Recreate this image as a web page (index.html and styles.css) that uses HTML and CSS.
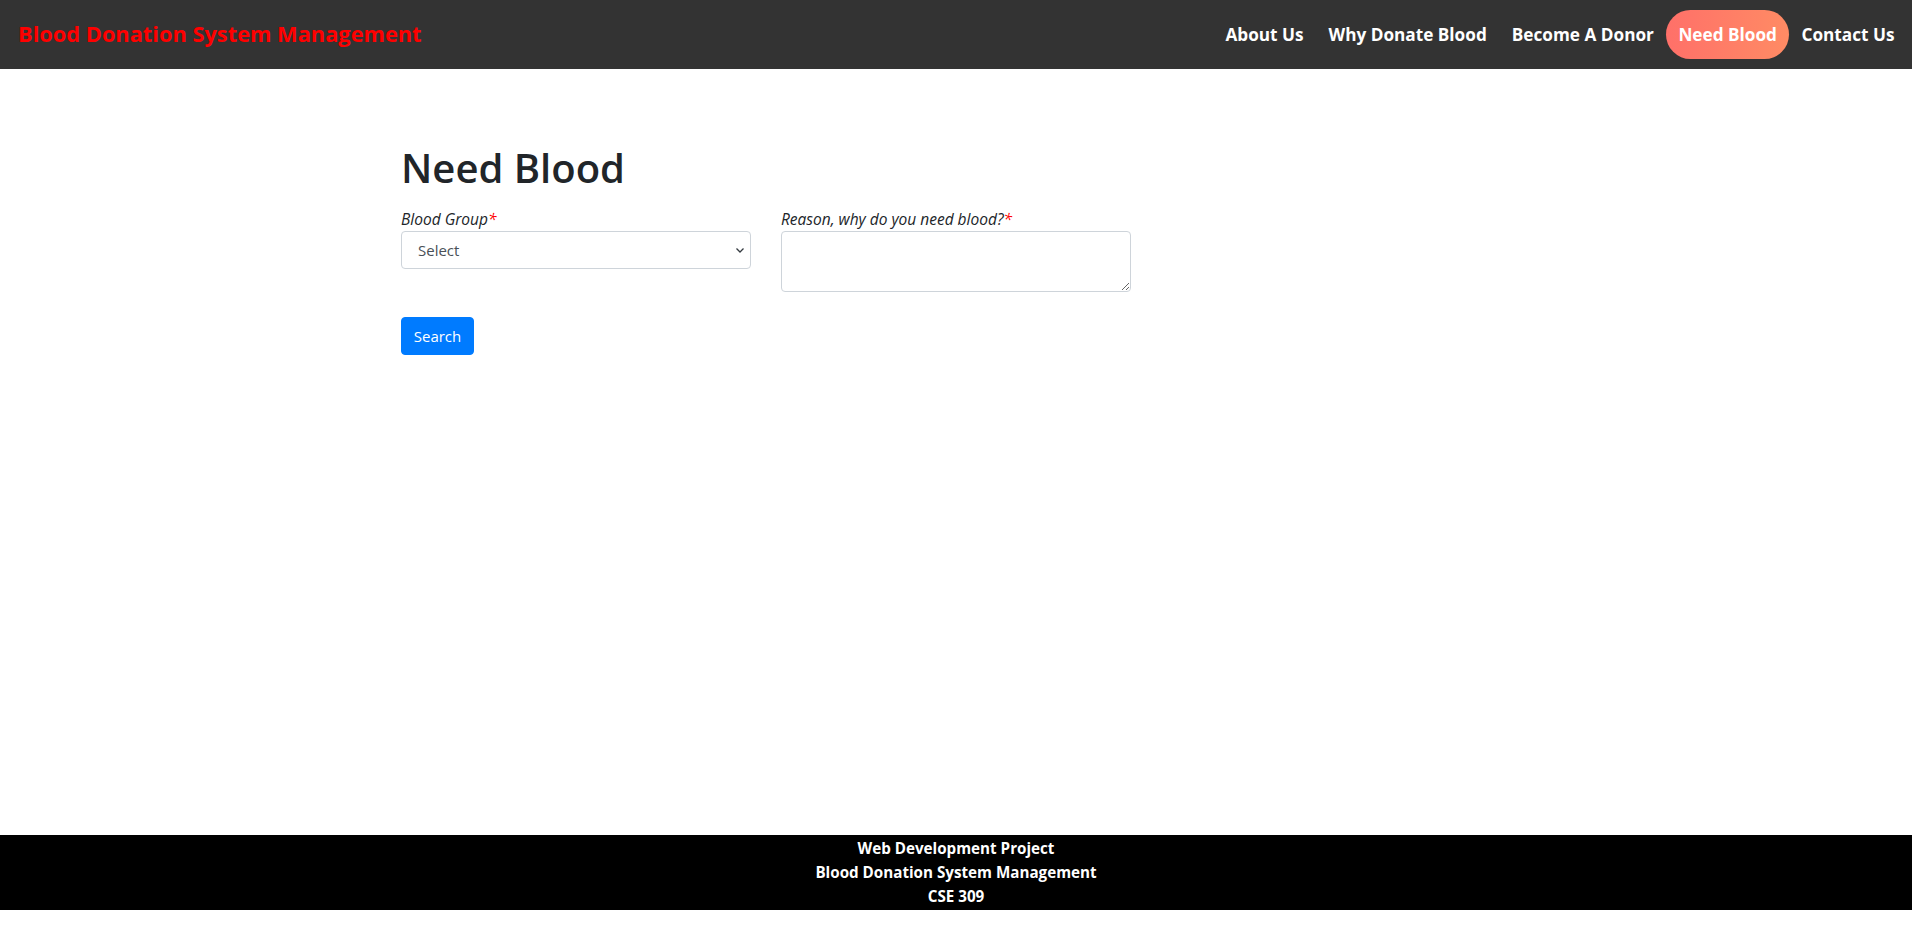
FILE: index.html
```html
<!DOCTYPE html>
<html lang="en">
<head>
<meta charset="utf-8">
<title>Need Blood</title>
<link rel="stylesheet" href="styles.css">
</head>
<body>
<nav class="navbar">
  <a class="brand" href="#">Blood Donation System Management</a>
  <ul class="nav-links">
    <li><a href="#">About Us</a></li>
    <li><a href="#">Why Donate Blood</a></li>
    <li><a href="#">Become A Donor</a></li>
    <li><a href="#" class="active">Need Blood</a></li>
    <li><a href="#">Contact Us</a></li>
  </ul>
</nav>
<main class="main">
  <div class="container">
    <h1 class="title">Need Blood</h1>
    <form class="form">
      <div class="row">
        <div class="col">
          <label class="label">Blood Group<span class="req">*</span></label>
          <div class="select-wrap">
            <select class="control select">
              <option>Select</option>
            </select>
            <svg class="chev" width="10" height="8" viewBox="0 0 10 8"><path d="M1.5 2.5 L5 6 L8.5 2.5" fill="none" stroke="#343a40" stroke-width="1.3"/></svg>
          </div>
        </div>
        <div class="col">
          <label class="label">Reason, why do you need blood?<span class="req">*</span></label>
          <textarea class="control textarea" rows="2"></textarea>
        </div>
      </div>
      <button type="button" class="btn">Search</button>
    </form>
  </div>
</main>
<footer class="footer">
  <div>Web Development Project</div>
  <div>Blood Donation System Management</div>
  <div>CSE 309</div>
</footer>
</body>
</html>
```
FILE: styles.css
```css
* { box-sizing: border-box; }
html, body { margin: 0; padding: 0; }
body {
  font-family: "Open Sans", "Noto Sans", sans-serif;
  font-size: 16px;
  line-height: 1.5;
  color: #212529;
  background: #fff;
}
.navbar {
  height: 69px;
  background: #333;
  display: flex;
  align-items: center;
  justify-content: space-between;
  padding: 0 5px 0 18px;
}
.brand {
  color: #ff0000;
  font-weight: 700;
  font-size: 21.8px;
  text-decoration: none;
}
.nav-links {
  list-style: none;
  margin: 0;
  padding: 0;
  display: flex;
  align-items: center;
}
.nav-links a {
  display: block;
  color: #fff;
  font-weight: 700;
  font-size: 17.2px;
  text-decoration: none;
  padding: 12px 12.5px;
  line-height: 25px;
}
.nav-links a.active {
  background: linear-gradient(to right, #ff7069, #ff8b64);
  border-radius: 25px;
  padding: 12px 12px;
}
.main {
  height: 766px;
  padding-top: 75px;
}
.container {
  width: 1140px;
  margin: 0 auto;
  padding: 0 15px;
}
.title {
  margin: 0 0 16px;
  font-size: 40px;
  font-weight: 600;
  line-height: 1.2;
}
.row {
  display: flex;
  gap: 30px;
  align-items: flex-start;
}
.col {
  width: 350px;
  display: flex;
  flex-direction: column;
}
.label {
  font-style: italic;
  font-size: 15.5px;
  line-height: 22px;
  margin-bottom: 1px;
}
.req { color: #ff0000; }
.control {
  width: 100%;
  border: 1px solid #ced4da;
  border-radius: 4px;
  font-family: inherit;
  font-size: 15px;
  color: #495057;
  background: #fff;
  padding: 6px 12px;
}
.select-wrap { position: relative; }
.select {
  height: 38px;
  appearance: none;
  -webkit-appearance: none;
  padding-left: 16px;
}
.chev {
  position: absolute;
  right: 6px;
  top: 15px;
  pointer-events: none;
}
.textarea {
  height: 61px;
  resize: vertical;
  display: block;
}
.btn {
  margin-top: 25px;
  background: #007bff;
  color: #fff;
  border: 1px solid #007bff;
  border-radius: 4px;
  font-family: inherit;
  font-size: 15px;
  height: 38px;
  width: 73px;
  padding: 0;
}
.footer {
  background: #000;
  color: #fff;
  font-weight: 700;
  font-size: 15.2px;
  line-height: 24px;
  text-align: center;
  padding: 1px 0 2px;
}
```
